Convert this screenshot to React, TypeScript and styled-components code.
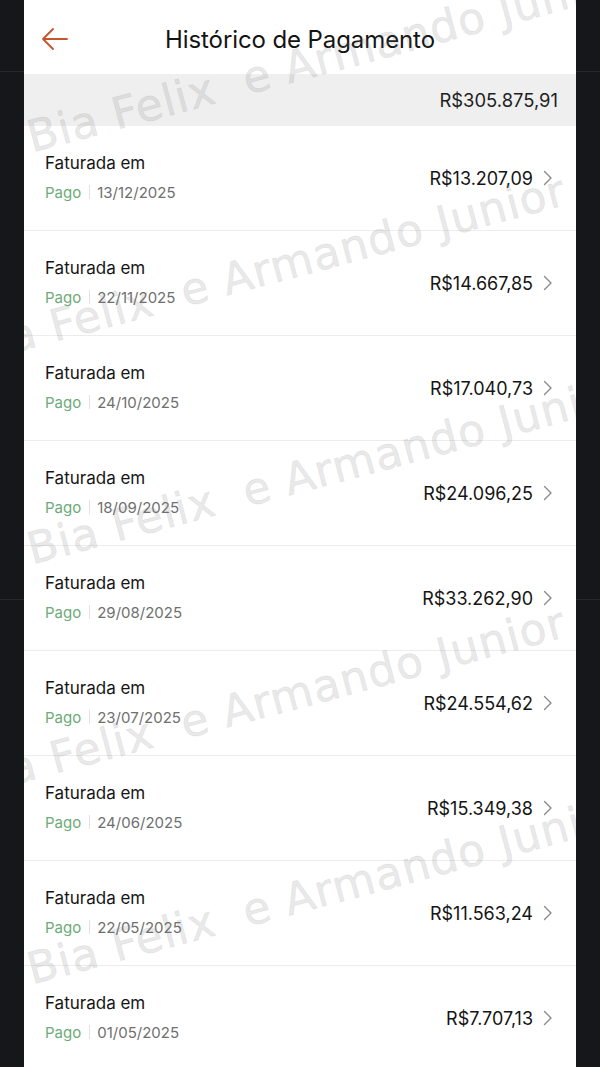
import styled, { createGlobalStyle } from "styled-components";

const GlobalStyle = createGlobalStyle`
  html, body {
    margin: 0;
    padding: 0;
    background: #16171a;
  }
  body {
    font-family: Inter, "Noto Sans", "Liberation Sans", sans-serif;
    -webkit-font-smoothing: antialiased;
  }
`;

type Invoice = {
  amount: string;
  date: string;
};

const invoices: Invoice[] = [
  { amount: "R$13.207,09", date: "13/12/2025" },
  { amount: "R$14.667,85", date: "22/11/2025" },
  { amount: "R$17.040,73", date: "24/10/2025" },
  { amount: "R$24.096,25", date: "18/09/2025" },
  { amount: "R$33.262,90", date: "29/08/2025" },
  { amount: "R$24.554,62", date: "23/07/2025" },
  { amount: "R$15.349,38", date: "24/06/2025" },
  { amount: "R$11.563,24", date: "22/05/2025" },
  { amount: "R$7.707,13", date: "01/05/2025" },
];

// bandas da marca d'água: topo e deslocamento horizontal
const watermarks = [
  { top: 112, left: 4 },
  { top: 324, left: -58 },
  { top: 524, left: 4 },
  { top: 756, left: -58 },
  { top: 944, left: 4 },
];

const App: React.FC = () => {
  return (
    <>
      <GlobalStyle />
      <Screen>
        <Panel>
          <Header>
            <BackButton aria-label="voltar">
              <svg width="28" height="24" viewBox="0 0 28 24" fill="none">
                <path
                  d="M27 12H3M13 2L3 12l10 10"
                  stroke="#c4552f"
                  strokeWidth="1.8"
                  strokeLinecap="round"
                  strokeLinejoin="round"
                />
              </svg>
            </BackButton>
            <Title>Histórico de Pagamento</Title>
          </Header>
          <TotalBar>R$305.875,91</TotalBar>
          <List>
            {invoices.map((item) => (
              <Row key={item.date}>
                <Info>
                  <Label>Faturada em</Label>
                  <Meta>
                    <Status>Pago</Status>
                    <Divider />
                    <DateText>{item.date}</DateText>
                  </Meta>
                </Info>
                <Amount>{item.amount}</Amount>
                <Chevron width="10" height="16" viewBox="0 0 10 16" fill="none">
                  <path
                    d="M1.5 1.5L8 8l-6.5 6.5"
                    stroke="#8a8a8a"
                    strokeWidth="1.4"
                    strokeLinecap="round"
                    strokeLinejoin="round"
                  />
                </Chevron>
              </Row>
            ))}
          </List>
          <Watermark>
            {watermarks.map((w, i) => (
              <WatermarkText key={i} style={{ top: w.top, left: w.left }}>
                Bia Felix&nbsp;&nbsp;e Armando Junior
              </WatermarkText>
            ))}
          </Watermark>
        </Panel>
      </Screen>
    </>
  );
};

export default App;

const Screen = styled.div`
  width: 600px;
  min-height: 1067px;
  display: flex;
  justify-content: center;
  background:
    linear-gradient(#26282b, #26282b) 0 71px / 100% 1px no-repeat,
    linear-gradient(#26282b, #26282b) 0 599px / 100% 1px no-repeat,
    #16171a;
`;

const Panel = styled.div`
  position: relative;
  width: 552px;
  background: #ffffff;
  overflow: hidden;
`;

const Header = styled.div`
  height: 74px;
  display: flex;
  align-items: center;
  justify-content: center;
  position: relative;
`;

const BackButton = styled.button`
  position: absolute;
  left: 16px;
  top: 27px;
  border: none;
  background: none;
  padding: 0;
  display: flex;
  cursor: pointer;
`;

const Title = styled.h1`
  margin: 0;
  font-size: 24px;
  font-weight: 400;
  color: #141414;
  letter-spacing: -0.1px;
  padding-top: 4px;
`;

const TotalBar = styled.div`
  height: 52px;
  background: #efefef;
  display: flex;
  align-items: center;
  justify-content: flex-end;
  padding-right: 18px;
  font-size: 18.4px;
  color: #1e1e1e;
`;

const List = styled.div`
  display: flex;
  flex-direction: column;
`;

const Row = styled.div`
  height: 104px;
  display: flex;
  align-items: center;
  padding: 0 23px 0 21px;
  border-bottom: 1px solid #ececec;
`;

const Info = styled.div`
  flex: 1;
  display: flex;
  flex-direction: column;
  gap: 10px;
  padding-bottom: 2px;
`;

const Label = styled.span`
  font-size: 17px;
  color: #161616;
`;

const Meta = styled.div`
  display: flex;
  align-items: center;
  font-size: 15px;
`;

const Status = styled.span`
  color: #6cab79;
`;

const Divider = styled.span`
  width: 1px;
  height: 14px;
  background: #e2e2e2;
  margin: 0 7px 0 8px;
`;

const DateText = styled.span`
  color: #6f6f6f;
`;

const Amount = styled.span`
  font-size: 18px;
  color: #151515;
`;

const Chevron = styled.svg`
  margin-left: 10px;
`;

const Watermark = styled.div`
  position: absolute;
  inset: 0;
  pointer-events: none;
`;

const WatermarkText = styled.span`
  position: absolute;
  white-space: nowrap;
  font-family: "DejaVu Sans", sans-serif;
  font-size: 44px;
  letter-spacing: 1px;
  color: rgba(120, 120, 120, 0.17);
  -webkit-text-stroke: 1px rgba(120, 120, 120, 0.1);
  transform-origin: left center;
  transform: rotate(-15deg);
`;
